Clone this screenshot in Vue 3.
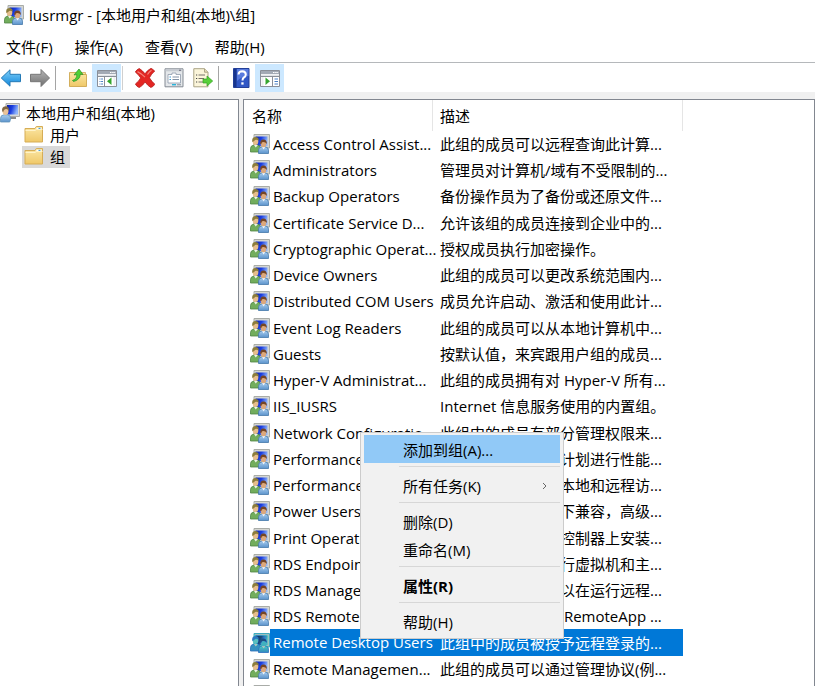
<script setup>
import { ref } from 'vue'

const menus = ['文件(F)', '操作(A)', '查看(V)', '帮助(H)']

const tools = [
  { icon: 'back', label: '后退' },
  { icon: 'forward', label: '前进' },
  { sep: true },
  { icon: 'up', label: '上一级' },
  { icon: 'tree', label: '显示/隐藏控制台树', active: true },
  { sep: true, light: true },
  { icon: 'delete', label: '删除' },
  { icon: 'props', label: '属性' },
  { icon: 'export', label: '导出列表' },
  { sep: true },
  { icon: 'help', label: '帮助' },
  { icon: 'actions', label: '显示/隐藏操作窗格', active: true }
]

const groups = [
  ['Access Control Assist...', '此组的成员可以远程查询此计算...'],
  ['Administrators', '管理员对计算机/域有不受限制的...'],
  ['Backup Operators', '备份操作员为了备份或还原文件...'],
  ['Certificate Service D...', '允许该组的成员连接到企业中的...'],
  ['Cryptographic Operat...', '授权成员执行加密操作。'],
  ['Device Owners', '此组的成员可以更改系统范围内...'],
  ['Distributed COM Users', '成员允许启动、激活和使用此计...'],
  ['Event Log Readers', '此组的成员可以从本地计算机中...'],
  ['Guests', '按默认值，来宾跟用户组的成员...'],
  ['Hyper-V Administrat...', '此组的成员拥有对 Hyper-V 所有...'],
  ['IIS_IUSRS', 'Internet 信息服务使用的内置组。'],
  ['Network Configuratio...', '此组中的成员有部分管理权限来...'],
  ['Performance Log Us...', '该组中的成员可以计划进行性能...'],
  ['Performance Monit...', '此组的成员可以从本地和远程访...'],
  ['Power Users', '包括高级用户以向下兼容，高级...'],
  ['Print Operators', '成员可以管理在域控制器上安装...'],
  ['RDS Endpoint Servers', '此组中的服务器运行虚拟机和主...'],
  ['RDS Management S...', '此组中的服务器可以在运行远程...'],
  ['RDS Remote Access...', '此组中的服务器使 RemoteApp ...'],
  ['Remote Desktop Users', '此组中的成员被授予远程登录的...'],
  ['Remote Managemen...', '此组的成员可以通过管理协议(例...'],
  ['Replicator', '支持域中的文件复制']
]
const selected = ref(19)

const contextMenu = [
  { text: '添加到组(A)...', hot: true },
  { sep: true },
  { text: '所有任务(K)', sub: true },
  { sep: true },
  { text: '删除(D)' },
  { text: '重命名(M)' },
  { sep: true },
  { text: '属性(R)', bold: true },
  { sep: true },
  { text: '帮助(H)' }
]
</script>

<template>
  <div class="window">
    <svg class="defs" aria-hidden="true">
      <defs>
        <linearGradient id="g-screen" x1="0" y1="0" x2="1" y2="0.3">
          <stop offset="0" stop-color="#0a1ea8" /><stop offset="0.5" stop-color="#1c3fe0" /><stop offset="1" stop-color="#8fb4fa" />
        </linearGradient>
        <linearGradient id="g-blue" x1="0" y1="0" x2="0" y2="1">
          <stop offset="0" stop-color="#7fd0f8" /><stop offset="1" stop-color="#0f86dc" />
        </linearGradient>
        <linearGradient id="g-gray" x1="0" y1="0" x2="0" y2="1">
          <stop offset="0" stop-color="#b5b5b5" /><stop offset="1" stop-color="#707070" />
        </linearGradient>
        <linearGradient id="g-folder" x1="0" y1="0" x2="0" y2="1">
          <stop offset="0" stop-color="#fbe7a6" /><stop offset="1" stop-color="#efc868" />
        </linearGradient>
        <linearGradient id="g-body" x1="0" y1="0" x2="0" y2="1">
          <stop offset="0" stop-color="#a9cdee" /><stop offset="1" stop-color="#5b93cc" />
        </linearGradient>
        <symbol id="i-group" viewBox="0 0 20 20">
          <path d="M4 .5h15.500v13.500H4z" fill="#d4d6d2" stroke="#a9aca8" />
          <path d="M5.500 2.500h12v9.500h-12z" fill="url(#g-screen)" />
          <path d="M.5 18v-3.500q0-3 3.500-3.500h3q3 0 3.500 3v4z" fill="#72ad5c" stroke="#4e8445" stroke-width=".8" />
          <path d="M4 11l1.700 2.500L8 11z" fill="#eef3e8" />
          <ellipse cx="5.500" cy="7.500" rx="2.800" ry="3.600" fill="#e5bd8b" />
          <path d="M2.300 8Q1.500 3.200 5.300 3q3.500 0 3.400 3.500Q5 5 4.300 7z" fill="#8c7d3c" />
          <path d="M8.500 19.500v-3.300q0-3 3.500-3.400h3q3.500.3 3.500 3.400v3.300z" fill="url(#g-body)" stroke="#4578a9" stroke-width=".8" />
          <path d="M12 12.800l1.600 2.600 1.700-2.600z" fill="#f4f8fc" />
          <ellipse cx="13.500" cy="9.800" rx="2.700" ry="3.500" fill="#dca87c" />
          <path d="M10.300 10Q9.800 5.400 13.500 5.400q3.600 0 3.300 4.600Q15.500 7.800 13 8q-1.500 0-1.700 2z" fill="#744525" />
        </symbol>
        <symbol id="i-user" viewBox="0 0 20 20">
          <path d="M6 .5h13.500v13H6z" fill="#d8dad8" stroke="#aaa" />
          <path d="M7 2h11v9.500H7z" fill="url(#g-screen)" />
          <path d="M10 14h6v2h-6z" fill="#8a8a8a" />
          <path d="M.5 19v-3.500q0-3.500 3.500-3.700h3.500q3.200.3 3.200 3.700l-1 3.500z" fill="url(#g-body)" stroke="#6093b9" stroke-width=".8" />
          <ellipse cx="5.500" cy="8" rx="3" ry="4" fill="#e8c299" />
          <path d="M2.200 8.500Q1.300 3.500 5.500 3.300 9.300 3.500 9 8 7.500 5.500 5 6.300q-1.500.5-1.600 2.500z" fill="#806743" />
        </symbol>
        <symbol id="i-folder" viewBox="0 0 20 20">
          <path d="M1 17V3.500h10l1.300-2h6.200V17z" fill="url(#g-folder)" stroke="#d6ad56" />
          <path d="M12.500 2.800h5v1.400h-5z" fill="#fff" /><path d="M14.500 2.800h2v1.400h-2z" fill="#4aa2d8" />
          <path d="M1.500 5.500h9.500l1.500-1h6" fill="none" stroke="#fff3c8" />
        </symbol>
        <symbol id="i-back" viewBox="0 0 20 20">
          <path d="M.3 10L9 1.800v4.500h10.500v7.400H9v4.500z" fill="url(#g-blue)" stroke="#2479b5" stroke-linejoin="round" />
        </symbol>
        <symbol id="i-forward" viewBox="0 0 20 20">
          <path d="M19.500 10L11 1.500v4.800H.5v7.400H11v4.800z" fill="url(#g-gray)" stroke="#777" stroke-linejoin="round" />
        </symbol>
        <symbol id="i-up" viewBox="0 0 20 20">
          <path d="M1.500 18.500v-14h7l1.500 2h8.500v12z" fill="url(#g-folder)" stroke="#c99f43" stroke-width=".8" />
          <path d="M12.500 4.500h5v2h-5z" fill="#f8dfa0" stroke="#c99f43" stroke-width=".7" />
          <path d="M4.500 12.500Q9 11 8.800 6.500L6 7l5-6 4 5.500-2.700-.2Q12 12 5.500 13.500z" fill="#50cf35" stroke="#269024" stroke-width=".7" />
        </symbol>
        <symbol id="i-tree" viewBox="0 0 20 20">
          <path d="M.5 2.500h19v16H.5z" fill="#fff" stroke="#8a8f98" />
          <path d="M1 3h18v3H1z" fill="#a3aab5" /><path d="M13 4h1.500v1H13zM15.200 4h1.500v1h-1.500zM17.200 4h1v1h-1z" fill="#fff" />
          <path d="M1 6.500h18v2H1z" fill="#e0e3e7" /><path d="M7.500 8v10M1 8.500h18" stroke="#8a8f98" />
          <path d="M2.500 11h3.500M2.500 13.500h3.500M2.500 16h3.500" stroke="#4a80c5" stroke-dasharray="1 .6 3" />
          <path d="M14.500 9.500v7.500L10 13.300z" fill="#35a52e" /><path d="M16.500 9v9h2V9z" fill="#eceef0" />
        </symbol>
        <symbol id="i-actions" viewBox="0 0 20 20">
          <path d="M.5 2.500h19v16H.5z" fill="#fff" stroke="#8a8f98" />
          <path d="M1 3h18v3H1z" fill="#a3aab5" /><path d="M13 4h1.500v1H13zM15.200 4h1.500v1h-1.500zM17.200 4h1v1h-1z" fill="#fff" />
          <path d="M1 6.500h18v2H1z" fill="#e0e3e7" /><path d="M12.500 8v10M1 8.500h18" stroke="#8a8f98" />
          <path d="M14.500 11H18M14.500 13.500H18M14.500 16H18" stroke="#4a80c5" />
          <path d="M5.500 9.500v7.500l4.500-3.700z" fill="#35a52e" /><path d="M1.500 9h2v9h-2z" fill="#eceef0" />
        </symbol>
        <symbol id="i-delete" viewBox="0 0 20 20">
          <path d="M.3 4Q2 1.200 4.300.5 7.500 2.500 10 5.800 12.500 2 16.200.2L19.700 3q-3.500 3-5.300 6.800 2.500 4 5.400 6.400-1.500 2.700-4 3.300-3.300-2-5.700-5.500Q7.500 18 4.200 19.600 1.500 18.500.4 16 4 13.300 5.700 9.900 3.500 6.500.3 4z" fill="#e32623" stroke="#b51b19" stroke-width=".8" />
          <path d="M2.500 3.600q4 2 7.500 5.500M12.500 6.500Q14 4 16.500 2.300" fill="none" stroke="#f5837a" stroke-width="1.200" />
        </symbol>
        <symbol id="i-props" viewBox="0 0 20 20">
          <path d="M1 .8h18v18H1z" fill="#e4e7ea" stroke="#838a93" />
          <path d="M1.500 1.300h17v2h-17z" fill="#c6cbd1" /><path d="M15 1.700h2v1h-2z" fill="#667" />
          <path d="M4 6.500h4v-1.500h4v1.500h4.500v8.500H4z" fill="#fff" stroke="#8e9aab" stroke-width=".8" />
          <path d="M8.500 9H15M8.500 11.500H15" stroke="#8291a5" /><path d="M5.500 9h1.500M5.500 11.500h1.500" stroke="#3999d2" />
          <path d="M8 16.700h4" stroke="#29b4da" stroke-width="1.400" /><path d="M13 16.700h4" stroke="#a0a8b0" stroke-width="1.400" />
        </symbol>
        <symbol id="i-export" viewBox="0 0 20 20">
          <path d="M.8.700h10.700l3.500 3.500v14.600H.8z" fill="#fbf5da" stroke="#aaa384" />
          <path d="M11.500.700v3.500H15" fill="#e4dcb9" stroke="#aaa384" />
          <path d="M5.500 7H12M5.500 10.500H11M5.500 14H11" stroke="#77736c" /><path d="M3 7h1.200M3 10.500h1.200M3 14h1.200" stroke="#444" />
          <path d="M10 11h4V8l5.700 5-5.700 5v-3h-4z" fill="#58cf39" stroke="#34a024" stroke-width=".7" />
        </symbol>
        <symbol id="i-help" viewBox="0 0 20 20">
          <path d="M2.500.500h15.500v19H2.500z" fill="#3157c5" stroke="#233f98" />
          <path d="M3 1h2.500v18H3z" fill="#18358d" /><path d="M6 1h11.500v7Q11 8 6 13z" fill="#597bdd" />
          <path d="M7.500 6.500q.3-3.300 3.800-3.300 3.500.2 3.500 3.200 0 1.800-1.800 3-1.500 1-1.500 3" fill="none" stroke="#fff" stroke-width="2" />
          <path d="M10.300 14.300h2.300v2.300h-2.300z" fill="#fff" />
        </symbol>
      </defs>
    </svg>

    <header class="title">
      <svg class="icon"><use href="#i-group" /></svg>
      <h1>lusrmgr - [本地用户和组(本地)\组]</h1>
    </header>

    <nav class="menubar">
      <button v-for="m in menus" :key="m" type="button">{{ m }}</button>
    </nav>

    <div class="toolbar" role="toolbar">
      <template v-for="(t, i) in tools" :key="i">
        <span v-if="t.sep" class="divider" :class="{ light: t.light }"></span>
        <button v-else type="button" :class="{ active: t.active }" :aria-label="t.label">
          <svg class="icon"><use :href="'#i-' + t.icon" /></svg>
        </button>
      </template>
    </div>

    <main class="panes">
      <aside class="tree">
        <button type="button" class="node"><svg class="icon"><use href="#i-user" /></svg>本地用户和组(本地)</button>
        <button type="button" class="node child"><svg class="icon"><use href="#i-folder" /></svg>用户</button>
        <button type="button" class="node child current"><svg class="icon"><use href="#i-folder" /></svg>组</button>
      </aside>

      <section class="list">
        <table>
          <colgroup><col class="c-name" /><col class="c-desc" /><col /></colgroup>
          <thead>
            <tr><th>名称</th><th>描述</th><td></td></tr>
          </thead>
          <tbody>
            <tr v-for="(g, i) in groups" :key="g[0]" :class="{ selected: i === selected }" @click="selected = i">
              <td>
                <div class="name">
                  <svg class="icon"><use href="#i-group" /></svg>
                  <span>{{ g[0] }}</span>
                </div>
              </td>
              <td class="desc">{{ g[1] }}</td>
              <td></td>
            </tr>
          </tbody>
        </table>
      </section>
    </main>

    <div class="context" role="menu">
      <template v-for="(c, i) in contextMenu" :key="i">
        <hr v-if="c.sep" />
        <button v-else type="button" role="menuitem" :class="{ hot: c.hot, bold: c.bold }">
          {{ c.text }}
          <svg v-if="c.sub" class="chevron" viewBox="0 0 6 8"><path d="M1 1l3 3-3 3" /></svg>
        </button>
      </template>
    </div>
  </div>
</template>

<style>
body {
  margin: 0;
}
</style>

<style scoped>
.window {
  position: relative;
  display: flex;
  flex-direction: column;
  height: 100vh;
  overflow: hidden;
  background: #fff;
  color: #000;
  font: 15px/22px "Open Sans", "Noto Sans CJK SC", sans-serif;
}
.defs {
  position: absolute;
  width: 0;
  height: 0;
}
.icon {
  display: block;
  flex: none;
  width: 20px;
  height: 20px;
}
button {
  margin: 0;
  padding: 0;
  border: 0;
  background: none;
  color: inherit;
  font: inherit;
  white-space: nowrap;
}
.title {
  display: flex;
  align-items: center;
  gap: 5px;
  height: 30px;
  padding-left: 4px;
}
.title h1 {
  margin: 0;
  font: inherit;
}
.menubar {
  display: flex;
  align-items: center;
  gap: 22px;
  box-sizing: border-box;
  height: 32px;
  padding: 2px 6px 0;
}
.toolbar {
  display: flex;
  height: 28px;
  margin-left: -4px;
  border-top: 1px solid #b5b8bb;
  padding-top: 1px;
}
.toolbar button {
  display: flex;
  align-items: center;
  justify-content: center;
  width: 29px;
}
.toolbar .active {
  background: #cce8ff;
}
.divider {
  width: 9px;
  background: linear-gradient(#a5a5a5, #a5a5a5) 1px 2px / 1px 24px no-repeat;
}
.divider.light {
  background-image: linear-gradient(#d0d0d0, #d0d0d0);
}
.panes {
  display: flex;
  flex: 1;
  gap: 4px;
  min-height: 0;
  padding: 7px 0 0;
  background: #f0f0f0;
}
.tree {
  flex: none;
  width: 238px;
  padding-top: 2px;
  border-top: 1px solid #828790;
  border-right: 1px solid #828790;
  background: #fff;
}
.node {
  display: flex;
  align-items: center;
  gap: 6px;
  height: 22px;
}
.child {
  margin-left: 22px;
  padding: 0 5px 0 2px;
}
.current {
  background: #d9d9d9;
}
.list {
  flex: 1;
  min-width: 0;
  overflow: hidden;
  border: 1px solid #828790;
  border-bottom: 0;
  background: #fff;
}
table {
  width: 100%;
  border-collapse: collapse;
  table-layout: fixed;
}
.c-name {
  width: 189px;
}
.c-desc {
  width: 250px;
}
th,
td {
  padding: 0;
  text-align: left;
  font-weight: 400;
  white-space: nowrap;
}
th {
  height: 31px;
  padding-left: 8px;
  box-shadow: inset -1px 0 #e5e5e5;
}
tbody tr {
  height: 26px;
}
tbody tr:nth-child(4n) {
  height: 27px;
}
th + th,
.desc {
  padding-left: 7px;
}
.name {
  display: flex;
  align-items: center;
  height: 26px;
  padding-left: 6px;
}
.name span {
  flex: 1;
  padding-left: 3px;
  line-height: 26px;
}
.selected .name {
  height: 27px;
}
.selected .name span {
  line-height: 27px;
}
.selected .name span,
.selected .desc {
  background: #0078d7;
  color: #fff;
}
.selected .icon {
  filter: sepia(1) hue-rotate(170deg) saturate(4) brightness(0.75);
}
.context {
  position: absolute;
  top: 432px;
  left: 360px;
  width: 204px;
  box-sizing: border-box;
  padding: 2px 3px 3px;
  border: 1px solid #ccc;
  background: #f1f1f1;
}
.context button {
  display: flex;
  align-items: center;
  justify-content: space-between;
  width: 100%;
  height: 28px;
  padding: 2px 12px 0 39px;
}
.context .hot {
  background: #91c9f7;
}
.context .bold {
  font-weight: 700;
}
.context hr {
  height: 1px;
  margin: 3px 0 4px 35px;
  border: 0;
  background: #d7d7d7;
}
.chevron {
  width: 6px;
  height: 8px;
  fill: none;
  stroke: #666;
}
</style>
